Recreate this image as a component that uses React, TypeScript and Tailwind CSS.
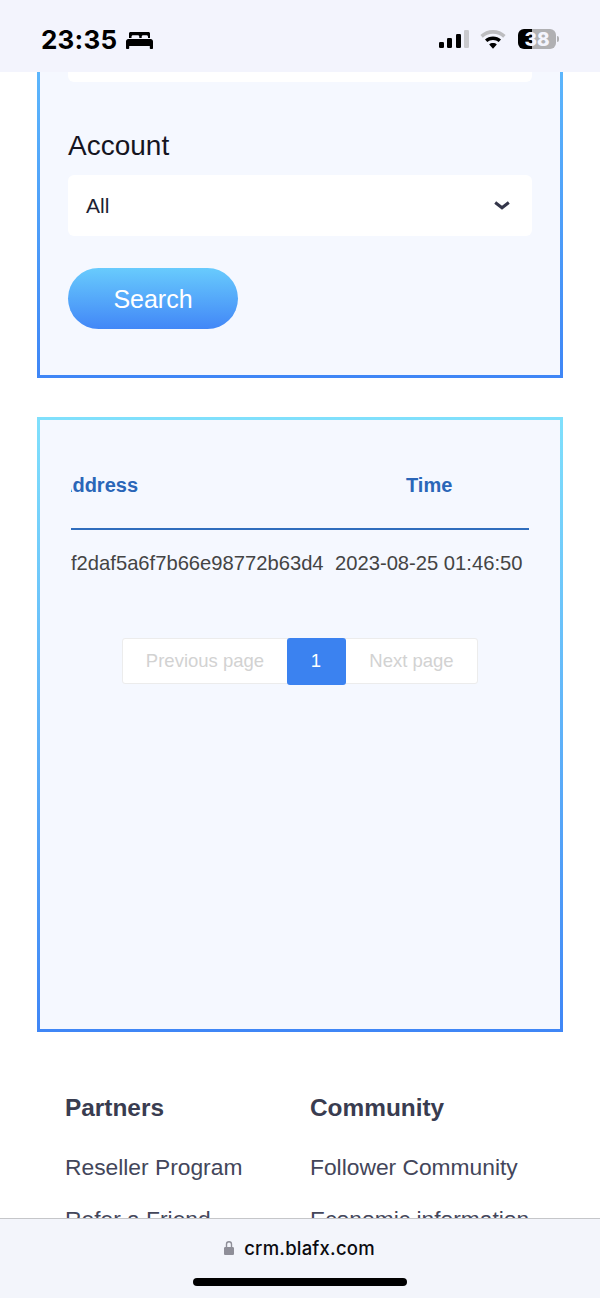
const BedIcon = () => (
  <svg width="27" height="17" viewBox="0 0 27 17" className="block">
    <path
      fill="#000"
      d="M3 1.500C3 .7 3.700 0 4.500 0h18c.8 0 1.500.7 1.500 1.500V6h-2V4.800c0-.9-.7-1.500-1.500-1.500h-3.300c-.9 0-1.500.6-1.500 1.500V6h-2.400V4.800c0-.9-.6-1.500-1.500-1.500H7c-.8 0-1.500.6-1.500 1.500V6H3V1.500Z"
    />
    <path
      fill="#000"
      d="M2.400 7h22.200C26 7 27 8 27 9.400V14H0V9.400C0 8 1 7 2.400 7ZM0 14h3.200v2.200c0 .5-.3.8-.8.8H.8c-.5 0-.8-.3-.8-.8V14ZM23.800 14H27v2.200c0 .5-.3.8-.8.8h-1.600c-.5 0-.8-.3-.8-.8V14Z"
    />
  </svg>
)

const SignalIcon = () => (
  <svg width="30" height="18" viewBox="0 0 30 18" className="block">
    <rect x="0" y="12" width="5" height="6" rx="1.200" fill="#000" />
    <rect x="8" y="8" width="5" height="10" rx="1.200" fill="#000" />
    <rect x="17" y="4" width="5" height="14" rx="1.200" fill="#000" />
    <rect x="25" y="0" width="5" height="18" rx="1.200" fill="#c9c9cd" />
  </svg>
)

const WifiIcon = () => (
  <svg width="26" height="19" viewBox="0 0 26 19" className="block">
    <path
      fill="#bdbdc0"
      d="M13 0c4.900 0 9.300 1.900 12.600 5l-2.400 2.700C20.600 5.200 17 3.700 13 3.700S5.400 5.200 2.800 7.700L.4 5C3.700 1.900 8.100 0 13 0Z"
    />
    <path
      fill="#000"
      d="M13 6.500c3.100 0 5.900 1.200 8 3.100l-2.300 2.500c-1.500-1.300-3.500-2.100-5.700-2.100s-4.200.8-5.700 2.100L5 9.600c2.100-1.900 4.900-3.100 8-3.100Z"
    />
    <path fill="#000" d="M13 13c1.500 0 2.800.5 3.800 1.400L13 18.700l-3.800-4.300c1-.9 2.300-1.400 3.800-1.400Z" />
  </svg>
)

const LockIcon = () => (
  <svg width="10" height="14" viewBox="0 0 10 14" className="block">
    <path
      fill="#8e8e98"
      d="M1.800 6V3.300a3.200 3.200 0 0 1 6.400 0V6h.5c.7 0 1.300.6 1.300 1.300v5.400c0 .7-.6 1.300-1.300 1.300H1.300C.6 14 0 13.400 0 12.700V7.300C0 6.600.6 6 1.300 6h.5Zm1.400 0h3.600V3.300a1.800 1.800 0 0 0-3.600 0V6Z"
    />
  </svg>
)

const ChevronIcon = () => (
  <svg width="16" height="9" viewBox="0 0 16 9" className="block">
    <path d="M1.200 1.500 8 6.800l6.800-5.300" fill="none" stroke="#34364a" strokeWidth="3" />
  </svg>
)

const StatusBar = () => (
  <div className="flex h-[72px] shrink-0 items-start justify-between bg-[#f3f4fd] pl-[41px] pr-[41px] pt-[29px]">
    <div className="flex items-center gap-[9px]">
      <span className="font-['Inter',sans-serif] text-[26px] font-bold leading-[22px] tracking-[0.2px] text-black">
        23:35
      </span>
      <BedIcon />
    </div>
    <div className="flex items-center">
      <SignalIcon />
      <div className="ml-[11px]">
        <WifiIcon />
      </div>
      <div className="ml-[12px] flex h-[20px] w-[38px] items-center justify-center rounded-[6px] bg-[linear-gradient(90deg,#000_37%,#b0b0b3_37%)] font-['Inter',sans-serif] text-[19px] font-extrabold leading-none text-[#f3f4fd]">
        38
      </div>
      <div className="ml-px h-[6px] w-[2px] rounded-r-sm bg-[#b0b0b3]" />
    </div>
  </div>
)

const FooterColumn = ({ title, items, width }: { title: string; items: string[]; width: string }) => (
  <div className={width}>
    <div className="text-[24.400px] font-bold leading-[28px] text-[#393c50]">{title}</div>
    <div className="mt-[31px] flex flex-col gap-[24px] text-[22.800px] leading-[28px] text-[#43465a]">
      {items.map((item) => (
        <div key={item}>{item}</div>
      ))}
    </div>
  </div>
)

export default function App() {
  return (
    <div className="relative flex h-[1298px] w-[600px] flex-col overflow-hidden bg-white font-['Liberation_Sans',Arial,sans-serif]">
      <StatusBar />

      <div className="mx-[37px] bg-[linear-gradient(180deg,#5cb6fc,#3f86f6)] px-[3px] pb-[3px]">
        <div className="bg-[#f5f8ff] px-[28px] pb-[46px]">
          <div className="h-[10px] rounded-b-md bg-white" />
          <div className="mt-[47px] text-[28px] leading-[34px] text-[#15151f]">Account</div>
          <div className="mt-[12px] flex h-[61px] items-center justify-between rounded-md bg-white pl-[18px] pr-[22px]">
            <span className="text-[21px] text-[#1d1f33]">All</span>
            <ChevronIcon />
          </div>
          <button className="mt-[32px] block h-[61px] w-[170px] rounded-full bg-[linear-gradient(180deg,#68cbfd,#4287f7)] pt-[2px] text-[25px] text-white">
            Search
          </button>
        </div>
      </div>

      <div className="mx-[37px] mt-[39px] h-[615px] shrink-0 bg-[linear-gradient(180deg,#80e0fc,#3f86f6)] p-[3px]">
        <div className="h-full bg-[#f5f8ff] px-[31px]">
          <div className="flex h-[110px] items-end border-b-2 border-[#2f6dbd] pb-[31px] text-[20px] font-bold leading-[24px] text-[#2a66b8]">
            <div className="flex w-[67px] justify-end overflow-hidden">
              <span>Address</span>
            </div>
            <div className="ml-[268px]">Time</div>
          </div>
          <div className="mt-[21px] flex items-center overflow-hidden whitespace-nowrap text-[20.200px] leading-[24px] text-[#444444]">
            <span className="w-[264px] shrink-0">f2daf5a6f7b66e98772b63d4</span>
            <span>2023-08-25 01:46:50</span>
          </div>
          <div className="ml-[51px] mt-[63px] flex h-[46px] w-[356px] items-center rounded-[3px] border border-[#ececec] bg-white text-[18.500px] text-[#d2d2d2]">
            <div className="w-[164px] text-center">Previous page</div>
            <div className="flex h-[47px] w-[59px] items-center justify-center rounded-[3px] bg-[#3b82f0] pr-px text-white">
              1
            </div>
            <div className="flex-1 text-center">Next page</div>
          </div>
        </div>
      </div>

      <div className="mt-[62px] flex pl-[65px]">
        <FooterColumn title="Partners" items={["Reseller Program", "Refer a Friend"]} width="w-[245px]" />
        <FooterColumn title="Community" items={["Follower Community", "Economic information"]} width="flex-1" />
      </div>

      <div className="absolute inset-x-0 bottom-0 h-[80px] border-t border-[#c5c6c9] bg-[#f3f5fb]">
        <div className="flex items-center justify-center gap-[10px] pr-px pt-[18px]">
          <LockIcon />
          <span className="font-['Inter',sans-serif] text-[18.500px] font-medium leading-[22px] tracking-[0.2px] text-[#0b0b0f]">
            crm.blafx.com
          </span>
        </div>
        <div className="absolute bottom-[12px] left-[193px] h-[8px] w-[214px] rounded-full bg-black" />
      </div>
    </div>
  )
}
